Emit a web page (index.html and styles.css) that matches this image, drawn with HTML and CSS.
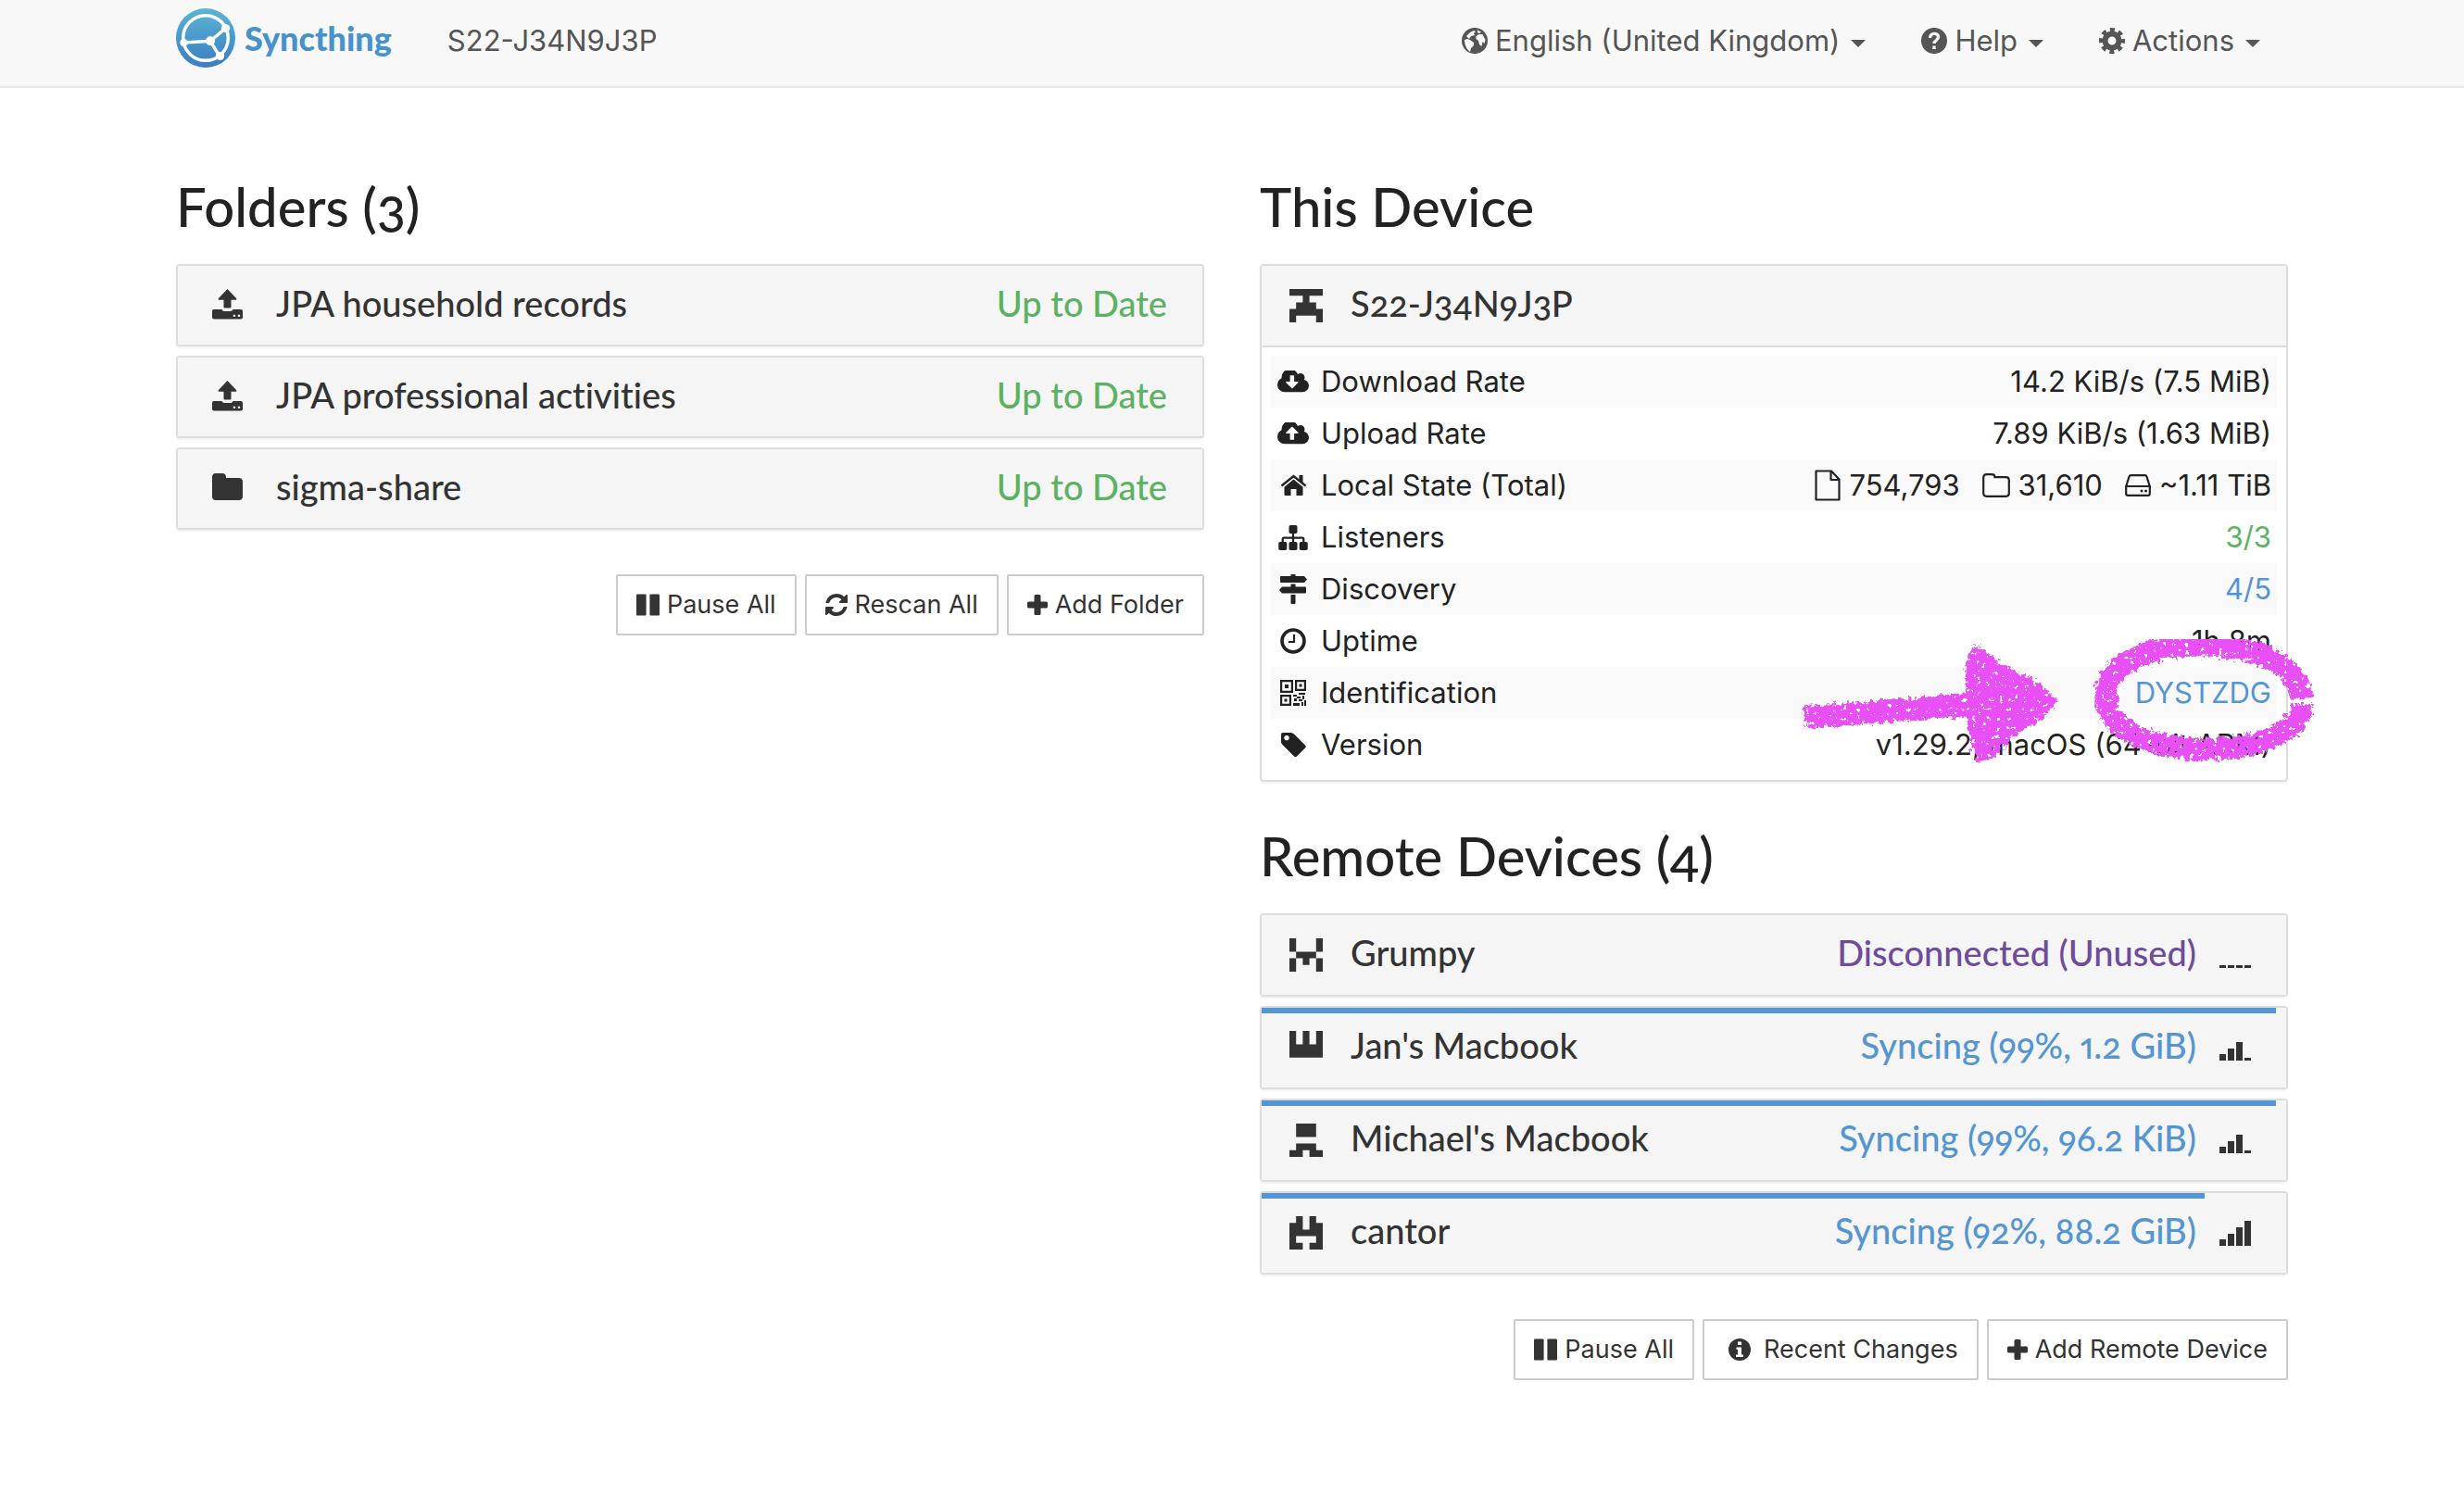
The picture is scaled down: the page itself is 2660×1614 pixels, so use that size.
FILE: index.html
```html
<!DOCTYPE html>
<html lang="en">
<head>
    <meta charset="UTF-8">
    <meta name="viewport" content="width=device-width, initial-scale=1.0">
    <title>S22-J34N9J3P | Syncthing</title>
    <link rel="stylesheet" href="styles.css">
</head>
<body>
    <!-- Icon sprite -->
    <svg class="sprite" aria-hidden="true">
        <symbol id="i-globe" viewBox="0 0 28 28">
            <circle cx="14" cy="14" r="14"/>
            <path fill="#f8f8f8" d="M3 13l3-1 3 1 4 3v3l-3 3-1 4C5 23 3 18 3 13zM15.500 9l3-2 4 0 3 6-1 4-2-2-1 5-2.500-2-1-4-2.500-2zM5 9l4-4 4-2 2 1-2 2 1 2-4 1-2 3zM17 2.500l4 2-2 1.500-2-1z"/>
        </symbol>
        <symbol id="i-help" viewBox="0 0 28 28">
            <circle cx="14" cy="14" r="14"/>
            <path d="M9.500 11c0-6 9-6 9-1 0 3.500-4.500 3.500-4.500 7M14 19.500v3.500" fill="none" stroke="#f8f8f8" stroke-width="3.400"/>
        </symbol>
        <symbol id="i-cog" viewBox="0 0 28 28">
            <circle cx="14" cy="14" r="7.500" fill="none" stroke="currentColor" stroke-width="6"/>
            <circle cx="14" cy="14" r="11.800" fill="none" stroke="currentColor" stroke-width="4.400" stroke-dasharray="5 4.267" stroke-dashoffset="2.500"/>
        </symbol>
        <symbol id="i-upload" viewBox="0 0 33 33">
            <path d="M16.500 0l9.500 10c.8 1 .3 1.800-.7 1.800H20.500v7.200c0 1-.6 1.600-1.500 1.600h-5c-.9 0-1.500-.6-1.500-1.600v-7.200H7.700c-1 0-1.500-.8-.7-1.800z"/>
            <path fill-rule="evenodd" d="M2 22h8.500c.6 1.500 1.600 2 3 2h6c1.400 0 2.400-.5 3-2H31c1.200 0 2 .8 2 2v6.500c0 1.200-.8 2-2 2H2c-1.200 0-2-.8-2-2V24c0-1.200.8-2 2-2zm22 5.500a1.300 1.300 0 1 0 .01 0zm5 0a1.300 1.300 0 1 0 .01 0z"/>
        </symbol>
        <symbol id="i-folder" viewBox="0 0 33 33">
            <path d="M4 1h7c2.500 0 4 1.500 4 4v1h14c2.500 0 4 1.500 4 4v16c0 2.500-1.500 4-4 4H4c-2.500 0-4-1.500-4-4V5c0-2.500 1.500-4 4-4z"/>
        </symbol>
        <symbol id="i-pause" viewBox="0 0 26 24">
            <rect width="11" height="24" rx="1"/><rect x="15" width="11" height="24" rx="1"/>
        </symbol>
        <symbol id="i-refresh" viewBox="128 128 1536 1536">
            <path d="M1639 1056q0 5-1 7-64 268-268 434.500t-478 166.500q-146 0-282.500-55t-243.500-157l-129 129q-19 19-45 19t-45-19-19-45v-448q0-26 19-45t45-19h448q26 0 45 19t19 45-19 45l-137 137q71 66 161 102t187 36q134 0 250-65t186-179q11-17 53-117 8-23 30-23h192q13 0 22.500 9.500t9.500 22.500zm25-800v448q0 26-19 45t-45 19h-448q-26 0-45-19t-19-45 19-45l138-138q-148-137-349-137-134 0-250 65t-186 179q-11 17-53 117-8 23-30 23h-199q-13 0-22.500-9.500t-9.500-22.500v-7q65-268 270-434.500t480-166.500q146 0 284 55.500t245 156.500l130-129q19-19 45-19t45 19 19 45z"/>
        </symbol>
        <symbol id="i-plus" viewBox="0 0 22 22">
            <path d="M9 0h4q1.500 0 1.500 1.500v6h6Q22 7.500 22 9v4q0 1.500-1.500 1.500h-6v6Q14.500 22 13 22H9q-1.500 0-1.500-1.500v-6h-6Q0 14.500 0 13V9q0-1.500 1.500-1.500h6v-6Q7.500 0 9 0z"/>
        </symbol>
        <symbol id="i-info" viewBox="0 0 24 24">
            <circle cx="12" cy="12" r="12"/>
            <path fill="#fff" d="M10 3.500h4v3.500h-4zM8.500 9.500H14v8h2V20H8v-2.500h2V12H8.500z"/>
        </symbol>
        <symbol id="i-cloud-down" viewBox="0 256 1920 1280">
            <path d="M1280 928q0-14-9-23t-23-9h-224v-352q0-13-9.500-22.500t-22.500-9.500h-192q-13 0-22.500 9.500t-9.500 22.500v352h-224q-13 0-22.500 9.500t-9.500 22.500q0 14 9 23l352 352q9 9 23 9t23-9l351-351q10-12 10-24zm640 224q0 159-112.500 271.500t-271.500 112.500h-1088q-185 0-316.500-131.500t-131.500-316.500q0-130 70-240t188-165q-2-30-2-43 0-212 150-362t362-150q156 0 285.500 87t188.500 231q71-62 166-62 106 0 181 75t75 181q0 76-41 138 130 31 213.500 135.500t83.500 238.500z"/>
        </symbol>
        <symbol id="i-cloud-up" viewBox="0 256 1920 1280">
            <path d="M1280 864q0-14-9-23l-352-352q-9-9-23-9t-23 9l-351 351q-10 12-10 24 0 14 9 23t23 9h224v352q0 13 9.500 22.500t22.500 9.500h192q13 0 22.500-9.500t9.500-22.500v-352h224q13 0 22.500-9.500t9.500-22.500zm640 288q0 159-112.500 271.500t-271.500 112.500h-1088q-185 0-316.500-131.500t-131.500-316.500q0-130 70-240t188-165q-2-30-2-43 0-212 150-362t362-150q156 0 285.500 87t188.500 231q71-62 166-62 106 0 181 75t75 181q0 76-41 138 130 31 213.500 135.500t83.500 238.500z"/>
        </symbol>
        <symbol id="i-home" viewBox="0 0 28 24">
            <path d="M14 5.500l10 8.300V22q0 1-1 1h-6v-7h-6v7H5q-1 0-1-1v-8.200z"/>
            <path d="M1 12.500L14 2l13 10.500" fill="none" stroke="currentColor" stroke-width="2.400"/>
            <path d="M20 1h4v9l-4-3z"/>
        </symbol>
        <symbol id="i-sitemap" viewBox="0 128 1792 1536">
            <path d="M1792 1248v320q0 40-28 68t-68 28h-320q-40 0-68-28t-28-68v-320q0-40 28-68t68-28h96v-192h-512v192h96q40 0 68 28t28 68v320q0 40-28 68t-68 28h-320q-40 0-68-28t-28-68v-320q0-40 28-68t68-28h96v-192h-512v192h96q40 0 68 28t28 68v320q0 40-28 68t-68 28h-320q-40 0-68-28t-28-68v-320q0-40 28-68t68-28h96v-192q0-52 38-90t90-38h512v-192h-96q-40 0-68-28t-28-68v-320q0-40 28-68t68-28h320q40 0 68 28t28 68v320q0 40-28 68t-68 28h-96v192h512q52 0 90 38t38 90v192h96q40 0 68 28t28 68z"/>
        </symbol>
        <symbol id="i-signs" viewBox="0 0 30 32">
            <path d="M12.500 0h5v2h9.500l3 3.500-3 3.500H2q-1 0-1-1V3q0-1 1-1h10.500zM12.500 10.500h5v3H28q1 0 1 1v5q0 1-1 1H3L0 17l3-3.500h9.500zM12.500 22h5v9q0 1-1 1h-3q-1 0-1-1z"/>
        </symbol>
        <symbol id="i-clock" viewBox="0 0 28 28">
            <circle cx="14" cy="14" r="12" fill="none" stroke="currentColor" stroke-width="3.600"/>
            <path d="M15 7v8H9" fill="none" stroke="currentColor" stroke-width="2.200"/>
        </symbol>
        <symbol id="i-qrcode" viewBox="0 0 28 28">
            <path fill="none" stroke="currentColor" stroke-width="2.200" d="M1.100 1.100h11.800v11.800H1.100zM17.100 1.100h9.800v9.800h-9.800zM1.100 17.100h9.800v9.800H1.100z"/>
            <path d="M5 5h4v4H5zM20.500 4.500h3v3h-3zM4.500 20.500h3v3h-3zM14 16h4v2h-4zM20 14h7v2h-7zM18 18h4v2h-4zM24 17h2v4h-2zM15 20h3v3h-3zM20 21h4v2h-4zM14 25h7v3h-7zM23 24h2v4h-2zM26 22h2v6h-2z"/>
        </symbol>
        <symbol id="i-tag" viewBox="0 0 28 28">
            <path fill-rule="evenodd" d="M1 3q0-2 2-2h8.500q2 0 3.500 1.500L27 14.500q1.500 1.500 0 3L18 26.500q-1.500 1.500-3 0L2.500 14Q1 12.500 1 11zm6 1a2.700 2.700 0 1 0 .01 0z"/>
        </symbol>
        <symbol id="i-file-o" viewBox="0 0 28 34">
            <path fill="none" stroke="currentColor" stroke-width="2.200" stroke-linejoin="round" d="M1.500 1.500H18l8.500 9v22h-25zM17.500 2v9H26"/>
        </symbol>
        <symbol id="i-folder-o" viewBox="0 0 30 26">
            <path fill="none" stroke="currentColor" stroke-width="2.200" d="M4.500 1.200h6q3 0 3 3h12q3.300 0 3.300 3.300v14q0 3.300-3.300 3.300h-21q-3.300 0-3.300-3.300v-17q0-3.300 3.300-3.300z"/>
        </symbol>
        <symbol id="i-hdd-o" viewBox="0 0 28 24">
            <path fill="none" stroke="currentColor" stroke-width="2.200" d="M1.200 13h25.600v8q0 1.800-1.800 1.800H3q-1.800 0-1.800-1.800zL4.500 2.700Q5 1.200 6.500 1.200h15q1.500 0 2 1.500L26.800 13"/>
            <circle cx="18" cy="18" r="1.500"/><circle cx="22.500" cy="18" r="1.500"/>
        </symbol>
    </svg>

    <!-- Top bar -->
    <nav class="navbar">
        <div class="container navbar-inner">
            <a class="brand" href="#">
                <svg class="logo" viewBox="0 0 64 64" aria-hidden="true">
                    <defs>
                        <linearGradient id="logoFill" x1="0" y1="0" x2="0" y2="1">
                            <stop offset="0" stop-color="#5ab5d3"/>
                            <stop offset="1" stop-color="#3a7dc2"/>
                        </linearGradient>
                    </defs>
                    <circle cx="32" cy="32" r="32" fill="url(#logoFill)"/>
                    <g fill="none" stroke="#fff" stroke-width="3.400">
                        <circle cx="32" cy="32" r="24.300"/>
                        <path d="M8.500 37L37 35.300 53 22M37 35.300L47 51.500"/>
                    </g>
                    <g fill="#fff">
                        <circle cx="8.500" cy="37" r="4.200"/>
                        <circle cx="37" cy="35.300" r="5"/>
                        <circle cx="53.500" cy="21.500" r="4.600"/>
                        <circle cx="47.500" cy="51.500" r="4.600"/>
                    </g>
                </svg>
                <span>Syncthing</span>
            </a>
            <p class="device-name">S22-J34N9J3P</p>
            <ul class="nav">
                <li><a href="#"><svg class="icon-28"><use href="#i-globe"/></svg><span>English (United Kingdom)</span><b class="caret"></b></a></li>
                <li><a href="#"><svg class="icon-28"><use href="#i-help"/></svg><span>Help</span><b class="caret"></b></a></li>
                <li><a href="#"><svg class="icon-28"><use href="#i-cog"/></svg><span>Actions</span><b class="caret"></b></a></li>
            </ul>
        </div>
    </nav>

    <main class="container columns">
        <!-- Folders -->
        <section class="column">
            <h3>Folders (3)</h3>
            <div class="panel-group">
                <div class="panel">
                    <button class="panel-heading">
                        <span class="panel-icon wide"><svg class="icon-33"><use href="#i-upload"/></svg></span>
                        <span class="panel-title">JPA household records</span>
                        <span class="panel-status success">Up to Date</span>
                    </button>
                </div>
                <div class="panel">
                    <button class="panel-heading">
                        <span class="panel-icon wide"><svg class="icon-33"><use href="#i-upload"/></svg></span>
                        <span class="panel-title">JPA professional activities</span>
                        <span class="panel-status success">Up to Date</span>
                    </button>
                </div>
                <div class="panel">
                    <button class="panel-heading">
                        <span class="panel-icon wide"><svg class="icon-33"><use href="#i-folder"/></svg></span>
                        <span class="panel-title">sigma-share</span>
                        <span class="panel-status success">Up to Date</span>
                    </button>
                </div>
            </div>
            <div class="actions">
                <button class="btn"><svg class="icon-pause"><use href="#i-pause"/></svg>Pause All</button>
                <button class="btn"><svg class="icon-24"><use href="#i-refresh"/></svg>Rescan All</button>
                <button class="btn"><svg class="icon-22"><use href="#i-plus"/></svg>Add Folder</button>
            </div>
        </section>

        <section class="column">
            <!-- This device -->
            <h3>This Device</h3>
            <div class="panel this-device">
                <button class="panel-heading">
                    <span class="panel-icon">
                        <svg class="identicon" viewBox="0 0 5 5"><path d="M0 0h5v1H3v1h1v1h1v2H4V4H1v1H0V3h1V2h1V1H0z"/></svg>
                    </span>
                    <span class="panel-title">S22-J34N9J3P</span>
                </button>
                <div class="panel-body">
                    <table>
                        <tbody>
                            <tr>
                                <th><span class="cell"><span class="fw"><svg class="icon-cloud"><use href="#i-cloud-down"/></svg></span>Download Rate</span></th>
                                <td>14.2 KiB/s (7.5 MiB)</td>
                            </tr>
                            <tr>
                                <th><span class="cell"><span class="fw"><svg class="icon-cloud"><use href="#i-cloud-up"/></svg></span>Upload Rate</span></th>
                                <td>7.89 KiB/s (1.63 MiB)</td>
                            </tr>
                            <tr>
                                <th><span class="cell"><span class="fw"><svg class="icon-home"><use href="#i-home"/></svg></span>Local State (Total)</span></th>
                                <td>
                                    <span class="totals">
                                        <span class="total"><svg class="icon-file"><use href="#i-file-o"/></svg>754,793</span>
                                        <span class="total"><svg class="icon-folder"><use href="#i-folder-o"/></svg>31,610</span>
                                        <span class="total"><svg class="icon-hdd"><use href="#i-hdd-o"/></svg>~1.11 TiB</span>
                                    </span>
                                </td>
                            </tr>
                            <tr>
                                <th><span class="cell"><span class="fw"><svg class="icon-sitemap"><use href="#i-sitemap"/></svg></span>Listeners</span></th>
                                <td><a class="success" href="#">3/3</a></td>
                            </tr>
                            <tr>
                                <th><span class="cell"><span class="fw"><svg class="icon-signs"><use href="#i-signs"/></svg></span>Discovery</span></th>
                                <td><a href="#">4/5</a></td>
                            </tr>
                            <tr>
                                <th><span class="cell"><span class="fw"><svg class="icon-28"><use href="#i-clock"/></svg></span>Uptime</span></th>
                                <td>1h 8m</td>
                            </tr>
                            <tr>
                                <th><span class="cell"><span class="fw"><svg class="icon-28"><use href="#i-qrcode"/></svg></span>Identification</span></th>
                                <td><a href="#">DYSTZDG</a></td>
                            </tr>
                            <tr>
                                <th><span class="cell"><span class="fw"><svg class="icon-28"><use href="#i-tag"/></svg></span>Version</span></th>
                                <td>v1.29.2, macOS (64-bit ARM)</td>
                            </tr>
                        </tbody>
                    </table>
                </div>

                <!-- Crayon arrow and ring around the device ID -->
                <svg class="callout" viewBox="0 0 570 150" aria-hidden="true">
                    <defs>
                        <filter id="crayon" x="-5%" y="-5%" width="110%" height="110%">
                            <feTurbulence type="fractalNoise" baseFrequency="0.2" numOctaves="3" seed="4" result="grain"/>
                            <feDisplacementMap in="SourceGraphic" in2="grain" scale="12" xChannelSelector="R" yChannelSelector="G" result="rough"/>
                            <feColorMatrix in="grain" type="matrix" values="0 0 0 0 0  0 0 0 0 0  0 0 0 0 0  0 0 -16 0 11.600" result="holes"/>
                            <feComposite in="rough" in2="holes" operator="in"/>
                        </filter>
                    </defs>
                    <g filter="url(#crayon)" fill="#e94ff7">
                        <path d="M8 88L60 85 120 80 184 74 186 100 120 104 60 109 10 112z"/>
                        <path d="M182 44L188 26 199 24 224 44 264 64 282 82 270 99 240 118 210 146 195 148 188 128 185 98z"/>
                        <path fill="none" stroke="#e94ff7" stroke-width="23" d="M546 80C542 44 500 23 440 23C380 22 334 42 334 78C336 112 372 129 424 134C490 140 546 118 546 86"/>
                    </g>
                </svg>
            </div>

            <!-- Remote devices -->
            <h3 class="spaced">Remote Devices (4)</h3>
            <div class="panel-group">
                <div class="panel">
                    <button class="panel-heading">
                        <span class="panel-icon">
                            <svg class="identicon" viewBox="0 0 5 5"><path d="M0 0h1v2h3V0h1v2H4v1h1v2H4V3H3v1H2V3H1v2H0V3h1V2H0z"/></svg>
                        </span>
                        <span class="panel-title">Grumpy</span>
                        <span class="panel-status unused">Disconnected (Unused)</span>
                        <svg class="signal" viewBox="0 0 34 27"><path d="M0 24h7v3H0zM9 24h7v3H9zM18 24h7v3h-7zM27 24h7v3h-7z"/></svg>
                    </button>
                </div>
                <div class="panel">
                    <div class="progress" style="width: 99%"></div>
                    <button class="panel-heading">
                        <span class="panel-icon">
                            <svg class="identicon" viewBox="0 0 5 5"><path d="M0 0h1v2h1V0h1v2h1V0h1v4H0z"/></svg>
                        </span>
                        <span class="panel-title">Jan's Macbook</span>
                        <span class="panel-status info">Syncing (99%, 1.2 GiB)</span>
                        <svg class="signal" viewBox="0 0 34 27"><path d="M0 20h7v7H0zM9 14h7v13H9zM18 7h7v20h-7zM27 24h7v3h-7z"/></svg>
                    </button>
                </div>
                <div class="panel">
                    <div class="progress" style="width: 99%"></div>
                    <button class="panel-heading">
                        <span class="panel-icon">
                            <svg class="identicon" viewBox="0 0 5 5"><path d="M1 0h3v2H1zM1 3h3v1h1v1H3V4H2v1H0V4h1z"/></svg>
                        </span>
                        <span class="panel-title">Michael's Macbook</span>
                        <span class="panel-status info">Syncing (99%, 96.2 KiB)</span>
                        <svg class="signal" viewBox="0 0 34 27"><path d="M0 20h7v7H0zM9 14h7v13H9zM18 7h7v20h-7zM27 24h7v3h-7z"/></svg>
                    </button>
                </div>
                <div class="panel">
                    <div class="progress" style="width: 92%"></div>
                    <button class="panel-heading">
                        <span class="panel-icon">
                            <svg class="identicon" viewBox="0 0 5 5"><path d="M1 0h1v2h1V0h1v1h1v4H3V4h1V3H1v1h1v1H0V1h1z"/></svg>
                        </span>
                        <span class="panel-title">cantor</span>
                        <span class="panel-status info">Syncing (92%, 88.2 GiB)</span>
                        <svg class="signal" viewBox="0 0 34 27"><path d="M0 20h7v7H0zM9 14h7v13H9zM18 7h7v20h-7zM27 0h7v27h-7z"/></svg>
                    </button>
                </div>
            </div>
            <div class="actions">
                <button class="btn"><svg class="icon-pause"><use href="#i-pause"/></svg>Pause All</button>
                <button class="btn btn-roomy"><svg class="icon-24"><use href="#i-info"/></svg>Recent Changes</button>
                <button class="btn"><svg class="icon-22"><use href="#i-plus"/></svg>Add Remote Device</button>
            </div>
        </section>
    </main>
</body>
</html>
```
FILE: styles.css
```css
/* General Styles */
* {
    box-sizing: border-box;
}

body {
    margin: 0;
    background-color: #fff;
    color: #222;
    font-family: Inter, "Liberation Sans", sans-serif;
    font-size: 31px;
    line-height: 40px;
}

a {
    color: #5495d2;
    text-decoration: none;
}

svg {
    display: block;
    flex: none;
    fill: currentColor;
}

.sprite {
    position: absolute;
    width: 0;
    height: 0;
}

.container {
    max-width: 2340px;
    margin: 0 auto;
    padding: 0 30px;
}

/* Status colours */
.success {
    color: #5cb262;
}

.info {
    color: #5495d2;
}

.unused {
    color: #6f4c99;
}

/* Navbar */
.navbar {
    background-color: #f8f8f8;
    border-bottom: 2px solid #e7e7e7;
    padding: 8px 0 19px;
}

.navbar-inner {
    display: flex;
    align-items: center;
    height: 66px;
}

.brand {
    display: flex;
    align-items: center;
    gap: 10px;
    color: #4792ca;
    font-family: Lato, sans-serif;
    font-size: 36px;
    font-weight: 900;
}

.logo {
    width: 64px;
    height: 64px;
}

.device-name {
    margin: 0 0 0 60px;
    padding-top: 5px;
    color: #555;
}

.nav {
    display: flex;
    margin: 0 0 0 auto;
    padding: 5px 0 0;
    list-style: none;
}

.nav a {
    display: flex;
    align-items: center;
    gap: 8px;
    padding: 0 30px;
    color: #555;
}

.caret {
    margin: 6px 0 0 4px;
    border-top: 8px solid;
    border-left: 8px solid transparent;
    border-right: 8px solid transparent;
}

/* Columns */
.columns {
    display: flex;
    align-items: flex-start;
    gap: 60px;
    padding-top: 96px;
    padding-bottom: 96px;
}

.column {
    flex: 1;
    min-width: 0;
}

h3 {
    margin: 0 0 30px;
    font-family: Lato, sans-serif;
    font-size: 58px;
    font-weight: 500;
    font-variant-numeric: oldstyle-nums proportional-nums;
    line-height: 64px;
}

h3.spaced {
    margin-top: 48px;
}

/* Panels */
.panel-group {
    display: flex;
    flex-direction: column;
    gap: 10px;
}

.panel {
    position: relative;
    border: 2px solid #ddd;
    border-radius: 4px;
    box-shadow: 0 2px 2px rgba(0, 0, 0, 0.05);
    background-color: #fff;
}

.panel-heading {
    display: flex;
    align-items: flex-start;
    width: 100%;
    padding: 20px 38px 25px 30px;
    border: none;
    background-color: #f5f5f5;
    color: #333;
    font-family: Lato, sans-serif;
    font-size: 38px;
    font-weight: 500;
    font-variant-ligatures: none;
    font-variant-numeric: oldstyle-nums proportional-nums;
    line-height: 40px;
    text-align: left;
    cursor: pointer;
}

.panel-icon {
    display: flex;
    justify-content: center;
    width: 36px;
    margin: 5px 30px 0 0;
}

.panel-icon.wide {
    width: 46px;
}

.panel-title {
    flex: 1;
}

.panel-status {
    margin-top: 1px;
    line-height: 39px;
}

.signal {
    width: 34px;
    height: 27px;
    margin: 10px 0 0 25px;
}

.progress {
    position: absolute;
    top: 0;
    left: 0;
    height: 6px;
    background-color: #5495d2;
}

.this-device .panel-heading {
    border-bottom: 2px solid #ddd;
}

.panel-body {
    padding: 9px 10px 10px;
}

/* Device table */
table {
    width: 100%;
    border-collapse: collapse;
}

tr:nth-child(odd) {
    background-color: #f9f9f9;
}

th,
td {
    padding: 8px 6px;
    font-weight: 400;
    text-align: left;
    white-space: nowrap;
}

td {
    text-align: right;
}

.cell {
    display: flex;
    align-items: center;
    gap: 12px;
}

.fw {
    display: flex;
    justify-content: center;
    width: 36px;
}

.totals {
    display: flex;
    justify-content: flex-end;
    gap: 24px;
}

.total {
    display: flex;
    align-items: center;
    gap: 9px;
}

/* Buttons */
.actions {
    display: flex;
    justify-content: flex-end;
    gap: 9px;
    margin-top: 48px;
}

.btn {
    display: flex;
    align-items: center;
    gap: 8px;
    padding: 11px 20px;
    border: 2px solid #ccc;
    border-radius: 2px;
    background-color: #fff;
    color: #333;
    font-family: Inter, "Liberation Sans", sans-serif;
    font-size: 27px;
    line-height: 40px;
    cursor: pointer;
}

.btn-roomy {
    gap: 14px;
    padding-left: 26px;
}

/* Icon sizes */
.icon-22 {
    width: 22px;
    height: 22px;
}

.icon-24 {
    width: 24px;
    height: 24px;
}

.icon-28 {
    width: 28px;
    height: 28px;
}

.icon-33 {
    width: 33px;
    height: 33px;
}

.icon-pause {
    width: 25px;
    height: 24px;
}

.icon-cloud {
    width: 34px;
    height: 24px;
}

.icon-home {
    width: 29px;
    height: 24px;
}

.icon-sitemap {
    width: 32px;
    height: 27px;
}

.icon-signs {
    width: 30px;
    height: 32px;
}

.icon-file {
    width: 28px;
    height: 34px;
}

.icon-folder {
    width: 30px;
    height: 26px;
}

.icon-hdd {
    width: 28px;
    height: 24px;
}

.identicon {
    width: 36px;
    height: 36px;
}

/* Callout drawn over the device panel */
.callout {
    position: absolute;
    top: 387px;
    right: -41px;
    width: 570px;
    height: 150px;
    overflow: visible;
    pointer-events: none;
}
```
